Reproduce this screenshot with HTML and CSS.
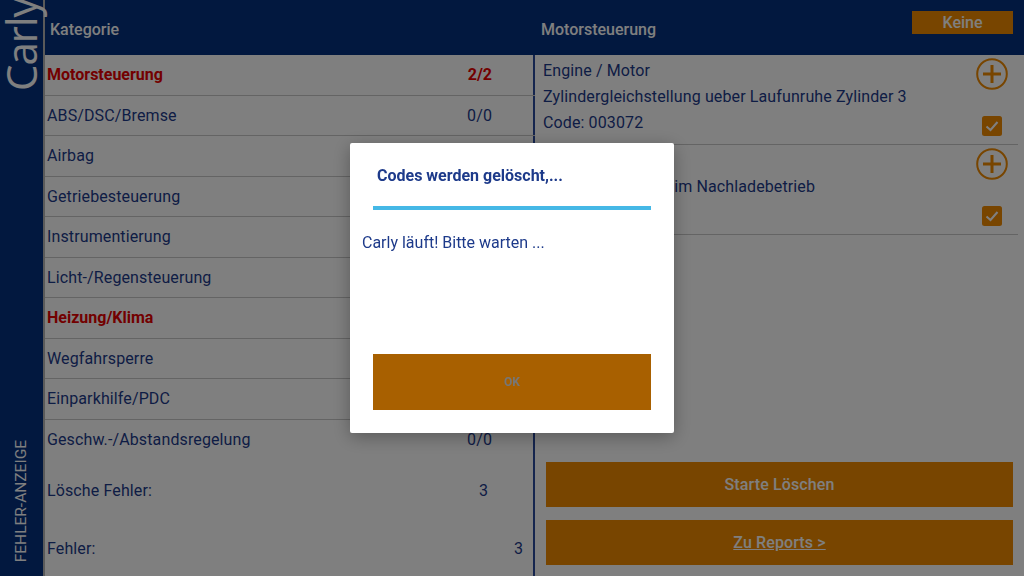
FILE: index.html
```html
<!DOCTYPE html>
<html lang="de">
<head>
<meta charset="utf-8">
<title>Carly Fehler-Anzeige</title>
<link rel="stylesheet" href="styles.css">
</head>
<body>
<div class="app">
  <aside class="rail">
    <span class="logo">Carly</span>
    <span class="rail-title">FEHLER-ANZEIGE</span>
  </aside>
  <main class="main">
    <header class="head">
      <div class="head-left">Kategorie</div>
      <div class="head-right">
        <span>Motorsteuerung</span>
        <span class="keine">Keine</span>
      </div>
    </header>
    <div class="panes">
      <section class="left">
        <div class="row alert"><span>Motorsteuerung</span><span class="count">2/2</span></div>
        <div class="row"><span>ABS/DSC/Bremse</span><span class="count">0/0</span></div>
        <div class="row"><span>Airbag</span><span class="count">0/0</span></div>
        <div class="row"><span>Getriebesteuerung</span><span class="count">0/0</span></div>
        <div class="row"><span>Instrumentierung</span><span class="count">0/0</span></div>
        <div class="row"><span>Licht-/Regensteuerung</span><span class="count">0/0</span></div>
        <div class="row alert"><span>Heizung/Klima</span><span class="count">1/1</span></div>
        <div class="row"><span>Wegfahrsperre</span><span class="count">0/0</span></div>
        <div class="row"><span>Einparkhilfe/PDC</span><span class="count">0/0</span></div>
        <div class="row last"><span>Geschw.-/Abstandsregelung</span><span class="count">0/0</span></div>
        <div class="sum sum-a"><span>Lösche Fehler:</span><span class="sum-val">3</span></div>
        <div class="sum sum-b"><span>Fehler:</span><span class="sum-val2">3</span></div>
      </section>
      <section class="right">
        <article class="item">
          <div class="lines">
            <p>Engine / Motor</p>
            <p>Zylindergleichstellung ueber Laufunruhe Zylinder 3</p>
            <p>Code: 003072</p>
          </div>
          <div class="marks">
            <svg class="plus" viewBox="0 0 32 32"><circle cx="16" cy="16" r="14.8"/><path d="M16 7v18M7 16h18"/></svg>
            <svg class="check" viewBox="0 0 20 20"><rect width="20" height="20" rx="2.5"/><path d="M4.5 10.5l4 3.5 7-8"/></svg>
          </div>
        </article>
        <article class="item">
          <div class="lines">
            <p>Engine / Motor</p>
            <p>Gemischadaption im Nachladebetrieb</p>
            <p>Code: 003073</p>
          </div>
          <div class="marks">
            <svg class="plus" viewBox="0 0 32 32"><circle cx="16" cy="16" r="14.8"/><path d="M16 7v18M7 16h18"/></svg>
            <svg class="check" viewBox="0 0 20 20"><rect width="20" height="20" rx="2.5"/><path d="M4.5 10.5l4 3.5 7-8"/></svg>
          </div>
        </article>
        <div class="actions">
          <button class="action">Starte Löschen</button>
          <button class="action link">Zu Reports &gt;</button>
        </div>
      </section>
    </div>
  </main>
</div>
<div class="scrim"></div>
<div class="dialog">
  <h2 class="dialog-title">Codes werden gelöscht,...</h2>
  <div class="progress"></div>
  <p class="dialog-text">Carly läuft! Bitte warten ...</p>
  <button class="ok">OK</button>
</div>
</body>
</html>
```
FILE: styles.css
```css
* { box-sizing: border-box; }
html, body { margin: 0; height: 100%; }
body { font-family: Roboto, "Liberation Sans", sans-serif; color: #1d3a8a; background: #fff; overflow: hidden; }
.app { display: flex; width: 1024px; height: 576px; }
.rail { width: 45px; flex: none; background: #04307f; border-right: 2px solid #b4b4b4; display: flex; flex-direction: column; justify-content: space-between; align-items: center; padding: 0 2px 14px 0; }
.logo { writing-mode: vertical-rl; transform: rotate(180deg); font-family: "Open Sans", sans-serif; font-size: 42px; line-height: 42px; color: #fff; letter-spacing: -1px; margin-top: 1px; height: 90px; text-align: center; }
.rail-title { writing-mode: vertical-rl; transform: rotate(180deg); font-size: 15.5px; line-height: 18px; color: #fff; }
.main { flex: 1; display: flex; flex-direction: column; min-width: 0; }
.head { height: 55px; flex: none; background: #04307f; display: flex; color: #fff; font-weight: 500; font-size: 16px; }
.head-left { width: 489px; padding: 20px 0 0 5px; line-height: 19px; }
.head-right { flex: 1; display: flex; justify-content: space-between; align-items: flex-start; padding: 20px 11px 0 7px; line-height: 19px; }
.keine { width: 101px; height: 23px; margin-top: -9px; background: #f08a00; text-align: center; line-height: 23px; }
.panes { flex: 1; display: flex; min-height: 0; }
.left { width: 490px; flex: none; border-right: 2px solid #2a4a9c; padding-left: 2px; display: flex; flex-direction: column; }
.row { height: 40.5px; display: flex; align-items: center; justify-content: space-between; padding-right: 43px; border-bottom: 1px solid #c8c8c8; font-size: 16px; letter-spacing: .12px; margin-right: -2px; margin-left: -2px; padding-left: 2px; }
.row.last { border-bottom: 0; }
.alert { color: #e60000; font-weight: 700; letter-spacing: 0; }
.sum { display: flex; justify-content: space-between; font-size: 16px; letter-spacing: .12px; line-height: 19px; }
.sum-a { margin-top: 21px; padding-right: 45px; }
.sum-b { margin-top: 39px; padding-right: 10px; }
.right { flex: 1; min-width: 0; display: flex; flex-direction: column; }
.item { height: 90px; flex: none; margin-right: 6px; border-bottom: 1px solid #c8c8c8; padding-left: 8px; display: flex; justify-content: space-between; font-size: 16px; letter-spacing: .12px; }
.lines p { margin: 0; height: 26px; line-height: 26px; }
.lines { padding-top: 3px; }
.marks { width: 43px; padding: 3px 10px 0 0; display: flex; flex-direction: column; align-items: center; position: relative; margin-right: 0; }
.plus { width: 32px; height: 32px; fill: none; stroke: #f08a00; margin-right: 0; }
.plus circle { stroke-width: 2; }
.plus path { stroke-width: 3; }
.check { width: 20px; height: 20px; margin-top: 26px; }
.check rect { fill: #f08a00; }
.check path { fill: none; stroke: #fff; stroke-width: 2; }
.actions { margin-top: auto; display: flex; flex-direction: column; gap: 13px; padding: 0 11px 11px 11px; }
.action { height: 45px; width: 467px; border: 0; background: #f08a00; color: #fff; font: 500 16px Roboto, sans-serif; padding: 0; letter-spacing: .12px; }
.link { text-decoration: underline; }
.scrim { position: fixed; inset: 0; background: rgba(0, 0, 0, .5); }
.dialog { position: fixed; left: 350px; top: 143px; width: 324px; height: 290px; background: #fff; border-radius: 2px; box-shadow: 0 4px 18px rgba(0,0,0,.3); padding: 0 23px; }
.dialog-title { margin: 23px 0 0 4px; font-size: 16px; line-height: 20px; font-weight: 700; color: #1d3a8a; }
.progress { height: 4px; margin-top: 20px; background: #45b8e6; }
.dialog-text { margin: 23px 0 0 -11px; font-size: 16px; line-height: 20px; color: #1d3a8a; }
.ok { position: absolute; left: 23px; top: 211px; width: 278px; height: 56px; border: 0; background: #a86000; color: #777; font: 700 12px Roboto, sans-serif; }
```
